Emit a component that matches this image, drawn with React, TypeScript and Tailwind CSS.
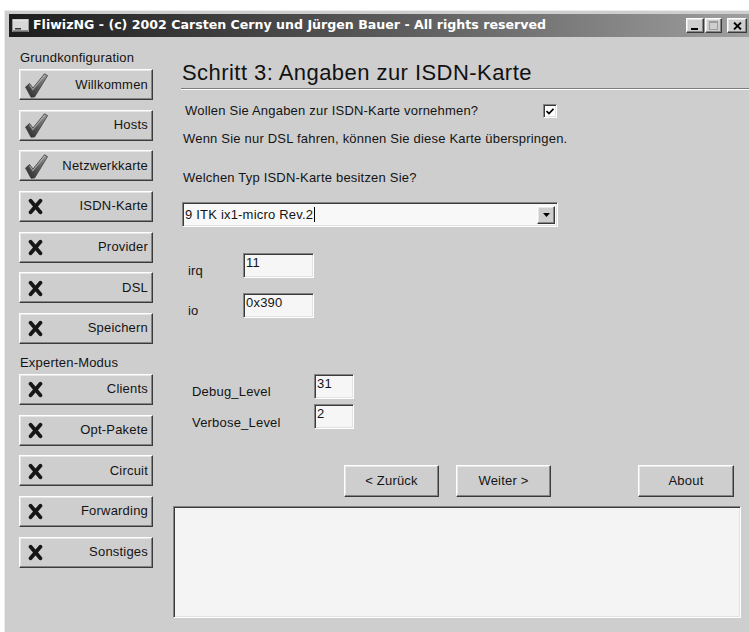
import React from "react";

const raised =
  "border border-t-white border-l-white border-r-[#3a3a3a] border-b-[#3a3a3a] shadow-[inset_-1px_-1px_0_#858585,inset_1px_1px_0_#e6e6e6]";
const sunken =
  "border border-t-[#858585] border-l-[#858585] border-r-white border-b-white shadow-[inset_1px_1px_0_#3a3a3a,inset_-1px_-1px_0_#e2e2e2]";

function CheckIcon() {
  return (
    <svg width="23" height="25" viewBox="0 0 23 25">
      <defs>
        <linearGradient id="chk" x1="0" y1="1" x2="1" y2="0">
          <stop offset="0" stopColor="#262626" />
          <stop offset="0.5" stopColor="#5c5c5c" />
          <stop offset="1" stopColor="#9c9c9c" />
        </linearGradient>
      </defs>
      <path
        d="M0.5 14 L4.5 10.5 L8 15 L19.5 0.8 L22.6 2.6 L9.6 24 L6 24.2 Z"
        fill="url(#chk)"
        stroke="#3c3c3c"
        strokeWidth="0.8"
        strokeLinejoin="round"
      />
      <path d="M4.4 11.8 L7.9 16.6 L19.8 2.2" fill="none" stroke="#bdbdbd" strokeWidth="1.1" opacity="0.75" />
    </svg>
  );
}

function CrossIcon() {
  return (
    <svg width="15" height="17" viewBox="0 0 15 17">
      <path d="M2.6 2.8 L12.4 14.2 M12.4 2.8 L2.6 14.2" stroke="#161616" strokeWidth="3.8" strokeLinecap="round" />
    </svg>
  );
}

function NavButton({ label, done }: { label: string; done?: boolean }) {
  return (
    <div className={`${raised} bg-[#cecece] h-[31px] w-[134px] flex items-center justify-between pr-[4px]`}>
      <div className={done ? "ml-[5px] mt-[1px]" : "ml-[8px] mt-[1px]"}>{done ? <CheckIcon /> : <CrossIcon />}</div>
      <span className="leading-[16px]">{label}</span>
    </div>
  );
}

function PushButton({ label, className }: { label: string; className?: string }) {
  return (
    <div className={`${raised} bg-[#cecece] h-[32px] w-[95px] flex items-center justify-center ${className ?? ""}`}>
      <span className="leading-[16px]">{label}</span>
    </div>
  );
}

function Field({ value, w }: { value: string; w: string }) {
  return (
    <div className={`${sunken} bg-[#f6f6f6] h-[25px] ${w} pl-[2px] pt-[1px] leading-[16px]`}>
      {value}
    </div>
  );
}

export default function App() {
  const basics: [string, boolean][] = [
    ["Willkommen", true],
    ["Hosts", true],
    ["Netzwerkkarte", true],
    ["ISDN-Karte", false],
    ["Provider", false],
    ["DSL", false],
    ["Speichern", false],
  ];
  const expert = ["Clients", "Opt-Pakete", "Circuit", "Forwarding", "Sonstiges"];

  return (
    <div
      className="w-[749px] h-[632px] bg-white overflow-hidden pt-[10px] pl-[4px] text-[13px] tracking-[0.2px] text-[#141414]"
      style={{ fontFamily: '"Liberation Sans", Arial, sans-serif' }}
    >
      <div className="h-[622px] w-[760px] bg-[#cecece] border-l border-t border-[#ececec] pl-[4px] pt-[3px] flex flex-col">
        {/* title bar */}
        <div className="h-[23px] bg-linear-to-r from-[#1d1d1d] via-[#5a5a5a] to-[#a2a2a2] flex items-center">
          <svg width="17" height="13" viewBox="0 0 17 13" className="ml-[3px]">
            <rect x="0.5" y="0.5" width="16" height="12" fill="#d8d8d8" stroke="#9a9a9a" />
            <line x1="1" y1="1" x2="16" y2="1" stroke="#f4f4f4" />
            <line x1="1" y1="12" x2="16" y2="12" stroke="#444" />
            <rect x="3" y="9" width="6" height="1.5" fill="#333" />
          </svg>
          <span
            className="ml-[4px] text-white font-bold text-[12.6px] tracking-normal whitespace-nowrap"
            style={{ fontFamily: '"DejaVu Sans", Verdana, sans-serif' }}
          >
            FliwizNG - (c) 2002 Carsten Cerny und Jürgen Bauer - All rights reserved
          </span>
          <div className="ml-auto mr-[17px] flex items-center">
            <div className={`${raised} bg-[#cecece] w-[18px] h-[15px] flex items-end justify-center pb-[2px]`}>
              <div className="w-[7px] h-[2px] bg-black ml-[-2px]" />
            </div>
            <div className={`${raised} bg-[#cecece] w-[17px] h-[15px] ml-[1px] flex items-center justify-center`}>
              <div className="w-[9px] h-[9px] border border-t-2 border-[#9c9c9c]" />
            </div>
            <div className={`${raised} bg-[#cecece] w-[20px] h-[15px] ml-[5px] flex items-center justify-center`}>
              <svg width="9" height="8" viewBox="0 0 9 8">
                <path d="M1 0.5 L8 7.5 M8 0.5 L1 7.5" stroke="#000" strokeWidth="1.8" />
              </svg>
            </div>
          </div>
        </div>

        {/* body */}
        <div className="flex flex-1">
          {/* navigation column */}
          <div className="w-[164px] pl-[10px] pt-[13px] flex flex-col">
            <div className="leading-[16px] h-[16px] pl-[1px]">Grundkonfiguration</div>
            <div className="mt-[3px] flex flex-col gap-[9.67px]">
              {basics.map(([l, d]) => (
                <NavButton key={l} label={l} done={d} />
              ))}
            </div>
            <div className="mt-[11px] leading-[16px] h-[16px] pl-[1px]">Experten-Modus</div>
            <div className="mt-[3px] flex flex-col gap-[9.67px]">
              {expert.map((l) => (
                <NavButton key={l} label={l} />
              ))}
            </div>
          </div>

          {/* step page */}
          <div className="flex-1 flex flex-col">
            <div className="mt-[23px] pl-[9px] text-[22px] leading-[26px] tracking-[0.45px] text-[#111]">
              Schritt 3: Angaben zur ISDN-Karte
            </div>
            <div className="mt-[2px] ml-[8px] border-t border-t-[#7c7c7c] border-b border-b-white" />

            <div className="mt-[13px] pl-[12px] flex items-center h-[16px]">
              <span className="w-[358px] leading-[16px]">Wollen Sie Angaben zur ISDN-Karte vornehmen?</span>
              <div className={`${sunken} bg-white w-[14px] h-[14px] flex items-center justify-center`}>
                <svg width="8" height="7" viewBox="0 0 8 7">
                  <path d="M0.5 3 L3 5.5 L7.5 0.8" fill="none" stroke="#000" strokeWidth="1.7" />
                </svg>
              </div>
            </div>
            <div className="mt-[12px] pl-[10px] leading-[16px]">
              Wenn Sie nur DSL fahren, können Sie diese Karte überspringen.
            </div>
            <div className="mt-[23px] pl-[10px] leading-[16px]">Welchen Typ ISDN-Karte besitzen Sie?</div>

            <div className={`mt-[16px] ml-[9px] ${sunken} bg-[#f8f8f8] w-[376px] h-[25px] flex items-center pl-[2px] pr-[2px]`}>
              <span className="leading-[16px]">9 ITK ix1-micro Rev.2</span>
              <div className="w-[1px] h-[15px] bg-black ml-[1px]" />
              <div className={`ml-auto ${raised} bg-[#cecece] w-[18px] h-[18px] flex items-center justify-center`}>
                <svg width="7" height="4" viewBox="0 0 7 4">
                  <path d="M0 0 H7 L3.5 4 Z" fill="#000" />
                </svg>
              </div>
            </div>

            <div className="mt-[26px] pl-[15px] flex items-end">
              <span className="w-[55px] leading-[16px] mb-[-1px]">irq</span>
              <Field value="11" w="w-[71px]" />
            </div>
            <div className="mt-[15px] pl-[15px] flex items-end">
              <span className="w-[55px] leading-[16px] mb-[-1px]">io</span>
              <Field value="0x390" w="w-[71px]" />
            </div>

            <div className="mt-[56px] pl-[19px] flex items-end">
              <span className="w-[122px] leading-[16px] mb-[-1px]">Debug_Level</span>
              <Field value="31" w="w-[40px]" />
            </div>
            <div className="mt-[5px] pl-[19px] flex items-end">
              <span className="w-[122px] leading-[16px] mb-[-2px]">Verbose_Level</span>
              <Field value="2" w="w-[40px]" />
            </div>

            <div className="mt-[36px] flex">
              <PushButton label="< Zurück" className="ml-[171px]" />
              <PushButton label="Weiter >" className="ml-[17px]" />
              <PushButton label="About" className="ml-[87px] w-[96px]" />
            </div>

            <div className={`mt-[9px] ${sunken} bg-[#f4f4f4] h-[112px] w-[568px]`} />
          </div>
        </div>
      </div>
    </div>
  );
}
